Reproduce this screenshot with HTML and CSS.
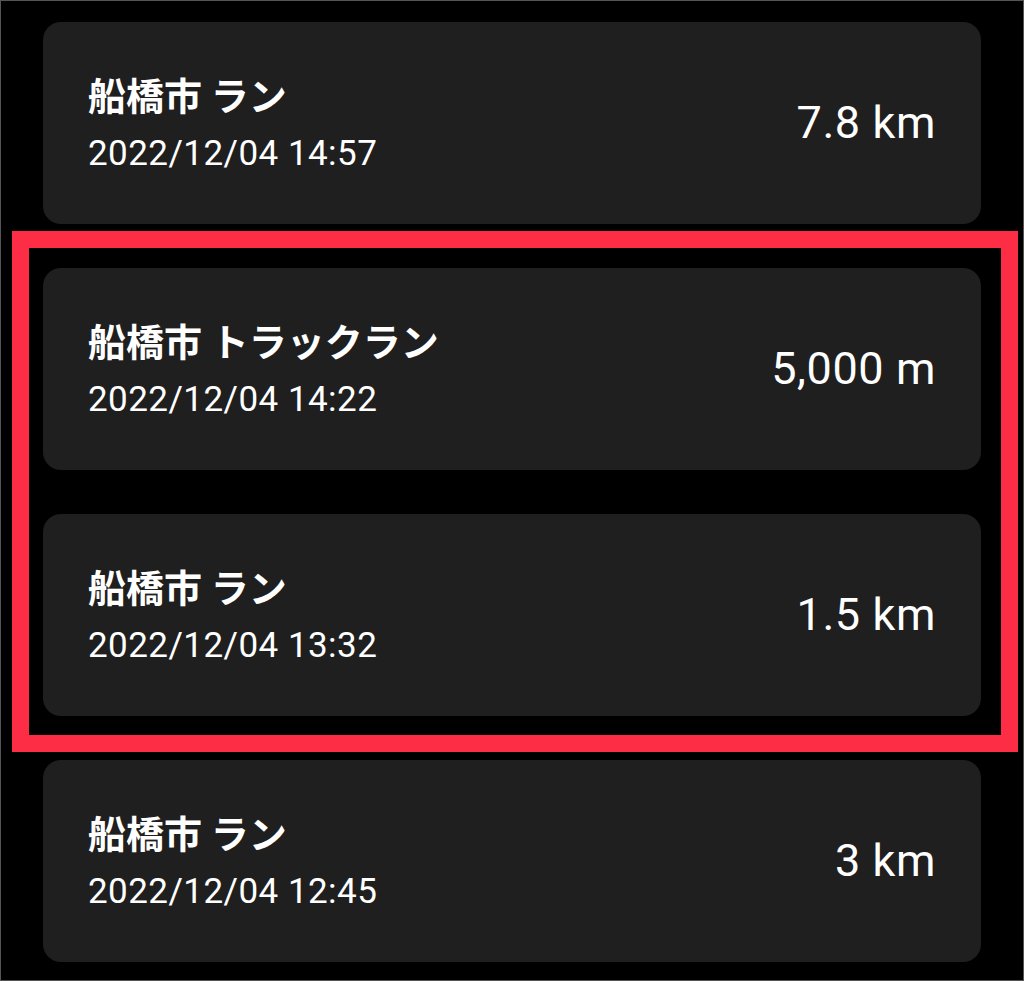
FILE: index.html
```html
<!DOCTYPE html>
<html lang="ja">
<head>
<meta charset="utf-8">
<title>ラン履歴</title>
<link rel="stylesheet" href="styles.css">
</head>
<body>
<div class="screen">
  <ul class="runs">
    <li class="run">
      <div class="run-info">
        <div class="run-title">船橋市 ラン</div>
        <div class="run-date">2022/12/04 14:57</div>
      </div>
      <div class="run-distance">7.8 km</div>
    </li>
    <li class="run">
      <div class="run-info">
        <div class="run-title">船橋市 トラックラン</div>
        <div class="run-date">2022/12/04 14:22</div>
      </div>
      <div class="run-distance">5,000 m</div>
    </li>
    <li class="run">
      <div class="run-info">
        <div class="run-title">船橋市 ラン</div>
        <div class="run-date">2022/12/04 13:32</div>
      </div>
      <div class="run-distance">1.5 km</div>
    </li>
    <li class="run">
      <div class="run-info">
        <div class="run-title">船橋市 ラン</div>
        <div class="run-date">2022/12/04 12:45</div>
      </div>
      <div class="run-distance">3 km</div>
    </li>
  </ul>
  <div class="highlight" aria-hidden="true"></div>
</div>
</body>
</html>
```

FILE: styles.css
```css
* {
  box-sizing: border-box;
}

html, body {
  margin: 0;
  padding: 0;
  background: #000;
}

.screen {
  position: relative;
  width: 1024px;
  height: 981px;
  border: 1px solid #555;
  background: #000;
  overflow: hidden;
}

.runs {
  list-style: none;
  margin: 0;
  padding: 21px 42px 0 42px;
  display: flex;
  flex-direction: column;
  gap: 44px;
}

.run {
  height: 202px;
  border-radius: 18px;
  background: #1f1f1f;
  display: flex;
  align-items: center;
  justify-content: space-between;
  padding: 0 45px;
  color: #fff;
}

.run-info {
  display: flex;
  flex-direction: column;
  gap: 16px;
}

.run-title {
  font-family: "Noto Sans CJK JP", "Noto Sans", sans-serif;
  font-weight: 700;
  font-size: 38px;
  line-height: 46px;
}

.run-date {
  font-family: Roboto, "Liberation Sans", sans-serif;
  font-size: 35px;
  line-height: 42px;
  letter-spacing: 0.45px;
}

.run-distance {
  font-family: Roboto, "Liberation Sans", sans-serif;
  font-size: 45px;
  line-height: 54px;
  letter-spacing: 0.6px;
}

.highlight {
  position: absolute;
  left: 11px;
  top: 230px;
  width: 1006px;
  height: 521px;
  border: 17px solid #fe2d46;
  pointer-events: none;
}
```
